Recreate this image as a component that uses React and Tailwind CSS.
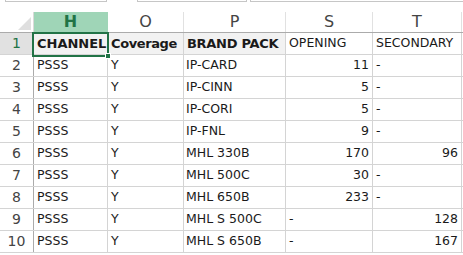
import React from "react";

const rows = [
  ["PSSS", "Y", "IP-CARD", "11", "-"],
  ["PSSS", "Y", "IP-CINN", "5", "-"],
  ["PSSS", "Y", "IP-CORI", "5", "-"],
  ["PSSS", "Y", "IP-FNL", "9", "-"],
  ["PSSS", "Y", "MHL 330B", "170", "96"],
  ["PSSS", "Y", "MHL 500C", "30", "-"],
  ["PSSS", "Y", "MHL 650B", "233", "-"],
  ["PSSS", "Y", "MHL S 500C", "-", "128"],
  ["PSSS", "Y", "MHL S 650B", "-", "167"],
];

const isNum = (v) => /^\d+$/.test(v);

export default function App() {
  return (
    <div
      className="relative w-[463px] h-[255px] overflow-hidden bg-white text-[#1a1a1a]"
      style={{ fontFamily: '"DejaVu Sans", sans-serif' }}
    >
      {/* formula bar remnants */}
      <div className="flex h-[12px] items-start">
        <div className="ml-[5px] w-[102px] h-[2px] border-x border-b border-[#c6c6c6]" />
        <div className="ml-[30px] w-[110px] h-[2px] border-x border-b border-[#c6c6c6]" />
        <div className="ml-[3px] flex-1 h-[2px] border-l border-b border-[#c6c6c6]" />
      </div>

      {/* column headers */}
      <div className="flex h-[21px] border-b border-[#ababab] text-[16px] text-[#444]">
        <div className="relative w-[34px] shrink-0 border-r border-[#dadada]">
          <div
            className="absolute right-[2px] bottom-[2px] w-[13px] h-[13px] bg-[#dfdfdf]"
            style={{ clipPath: "polygon(100% 0, 100% 100%, 0 100%)" }}
          />
        </div>
        <div className="w-[74px] shrink-0 flex items-center justify-center bg-[#9fd5b7] text-[#217346] font-bold border-r border-[#9fd5b7]">
          H
        </div>
        <div className="w-[76px] shrink-0 flex items-center justify-center border-r border-[#e1e1e1]">O</div>
        <div className="w-[102px] shrink-0 flex items-center justify-center border-r border-[#e1e1e1]">P</div>
        <div className="w-[87px] shrink-0 flex items-center justify-center border-r border-[#e1e1e1]">S</div>
        <div className="w-[89px] shrink-0 flex items-center justify-center border-r border-[#e1e1e1]">T</div>
        <div className="flex-1" />
      </div>

      {/* row 1 */}
      <div className="flex h-[22px] border-b border-[#d4d4d4]">
        <div className="w-[34px] shrink-0 flex items-center justify-center bg-[#e1e1e1] border-r border-[#ababab] text-[14px] text-[#217346]">
          1
        </div>
        <div className="w-[74px] shrink-0 flex items-center pl-[3px] bg-[#f2f2f2] border-r border-[#d4d4d4] text-[13px] font-bold whitespace-nowrap overflow-visible">
          CHANNEL
        </div>
        <div className="w-[76px] shrink-0 flex items-center pl-[3px] bg-[#f2f2f2] border-r border-[#d4d4d4] text-[13px] font-bold tracking-[-0.4px] whitespace-nowrap">
          Coverage
        </div>
        <div className="w-[102px] shrink-0 flex items-center pl-[3px] bg-[#f2f2f2] border-r border-[#d4d4d4] text-[13px] font-bold tracking-[-0.3px] whitespace-nowrap">
          BRAND PACK
        </div>
        <div className="w-[87px] shrink-0 flex items-center pl-[3px] border-r border-[#d4d4d4] text-[12.5px] whitespace-nowrap">
          OPENING
        </div>
        <div className="w-[89px] shrink-0 flex items-center pl-[3px] border-r border-[#d4d4d4] text-[12.5px] whitespace-nowrap">
          SECONDARY
        </div>
        <div className="flex-1" />
      </div>

      {rows.map((r, i) => (
        <div key={i} className="flex h-[22px] border-b border-[#d4d4d4] text-[12.5px]">
          <div className="w-[34px] shrink-0 flex items-center justify-center border-r border-[#ababab] text-[14px] text-[#444]">
            {i + 2}
          </div>
          <div className="w-[74px] shrink-0 flex items-center pl-[3px] border-r border-[#d4d4d4]">{r[0]}</div>
          <div className="w-[76px] shrink-0 flex items-center pl-[3px] border-r border-[#d4d4d4]">{r[1]}</div>
          <div className="w-[102px] shrink-0 flex items-center pl-[2px] border-r border-[#d4d4d4] whitespace-nowrap">
            {r[2]}
          </div>
          <div
            className={`w-[87px] shrink-0 flex items-center border-r border-[#d4d4d4] ${
              isNum(r[3]) ? "justify-end pr-[3px]" : "pl-[3px]"
            }`}
          >
            {r[3]}
          </div>
          <div
            className={`w-[89px] shrink-0 flex items-center border-r border-[#d4d4d4] ${
              isNum(r[4]) ? "justify-end pr-[3px]" : "pl-[3px]"
            }`}
          >
            {r[4]}
          </div>
          <div className="flex-1" />
        </div>
      ))}

      {/* selection box */}
      <div className="absolute left-[32px] top-[32px] w-[77px] h-[25px] border-2 border-[#217346] pointer-events-none" />
      <div className="absolute left-[105px] top-[53px] w-[6px] h-[6px] bg-[#217346] border border-white" />
    </div>
  );
}
